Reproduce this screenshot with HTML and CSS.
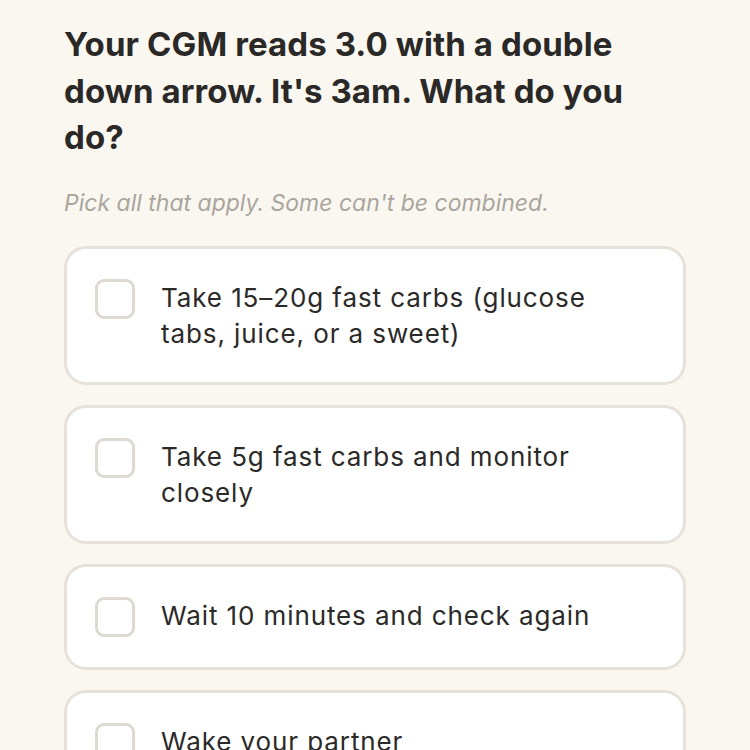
FILE: index.html
```html
<!DOCTYPE html>
<html lang="en">
<head>
<meta charset="utf-8">
<title>Question</title>
<link rel="stylesheet" href="styles.css">
</head>
<body>
<main class="page">
  <h1 class="question">Your CGM reads 3.0 with a double down arrow. It's 3am. What do you do?</h1>
  <p class="hint">Pick all that apply. Some can't be combined.</p>
  <ul class="options">
    <li class="option"><span class="box"></span><span class="label">Take 15–20g fast carbs (glucose tabs, juice, or a sweet)</span></li>
    <li class="option"><span class="box"></span><span class="label">Take 5g fast carbs and monitor closely</span></li>
    <li class="option"><span class="box"></span><span class="label">Wait 10 minutes and check again</span></li>
    <li class="option"><span class="box"></span><span class="label">Wake your partner</span></li>
  </ul>
</main>
</body>
</html>
```
FILE: styles.css
```css
html, body {
  margin: 0;
  padding: 0;
  background: #faf7f1;
}
.page {
  padding: 21px 64px 0;
  font-family: Inter, "Liberation Sans", sans-serif;
  color: #2a2927;
}
.question {
  margin: 0;
  font-size: 33px;
  line-height: 46.5px;
  font-weight: 700;
  letter-spacing: 0.1px;
}
.hint {
  margin: 27px 0 0;
  font-size: 23px;
  line-height: 30px;
  font-style: italic;
  color: #aaa59d;
}
.options {
  list-style: none;
  margin: 28px 0 0;
  padding: 0;
  display: flex;
  flex-direction: column;
  gap: 20px;
}
.option {
  display: flex;
  align-items: flex-start;
  gap: 26px;
  background: #ffffff;
  border: 3px solid #e6e2da;
  border-radius: 22px;
  padding: 30px 50px 30px 28px;
  font-family: Inter, sans-serif;
  font-size: 26px;
  line-height: 36px;
  letter-spacing: 0.9px;
  color: #2b2a28;
}
.box {
  flex: none;
  width: 34px;
  height: 34px;
  border: 3px solid #dedad2;
  border-radius: 9px;
  background: #fff;
}
.label {
  padding-top: 1px;
}
```
